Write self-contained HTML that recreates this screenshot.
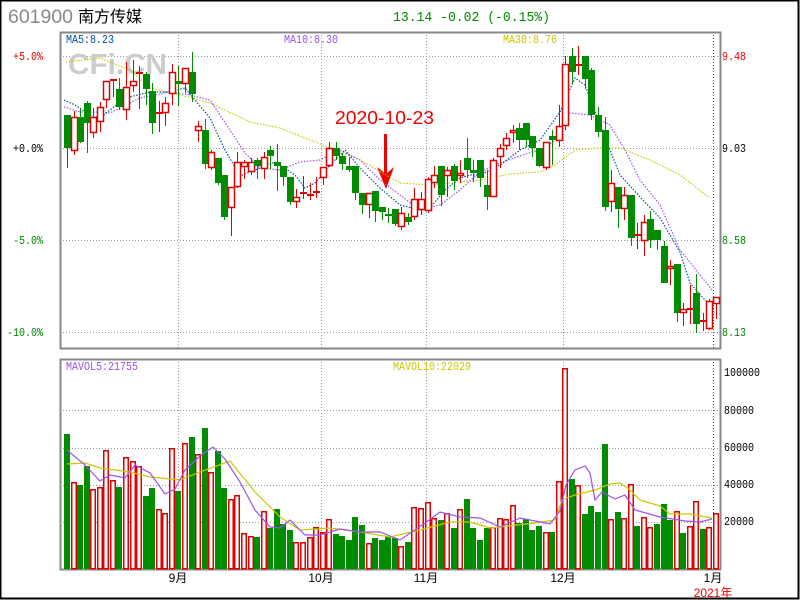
<!DOCTYPE html>
<html><head><meta charset="utf-8"><style>
html,body{margin:0;padding:0;background:#fff;}
body{width:800px;height:600px;overflow:hidden;}
svg{display:block;}
</style></head><body>
<svg id="s" width="800" height="600" xmlns="http://www.w3.org/2000/svg" font-family="Liberation Mono, monospace">
<rect x="0" y="0" width="800" height="600" fill="#fff"/>
<rect x="0.5" y="0.5" width="798" height="598" fill="none" stroke="#000" stroke-width="2"/>
<text x="8" y="23" font-family="Liberation Sans, sans-serif" font-size="19" fill="#888" textLength="65" lengthAdjust="spacingAndGlyphs">601900</text>
<text x="78" y="22" font-family="Liberation Sans, 'Noto Sans CJK SC', sans-serif" font-size="16" fill="#000">南方传媒</text>
<text x="393" y="21" font-size="14" fill="#008800" textLength="157" lengthAdjust="spacingAndGlyphs">13.14 -0.02 (-0.15%)</text>
<g stroke="#999" stroke-dasharray="1,2" stroke-width="1">
<line x1="60" y1="56.5" x2="720" y2="56.5"/><line x1="60" y1="148.5" x2="720" y2="148.5"/>
<line x1="60" y1="240.5" x2="720" y2="240.5"/><line x1="60" y1="332.5" x2="720" y2="332.5"/>
<line x1="178.5" y1="32" x2="178.5" y2="348"/><line x1="321.5" y1="32" x2="321.5" y2="348"/>
<line x1="426.5" y1="32" x2="426.5" y2="348"/><line x1="563.5" y1="32" x2="563.5" y2="348"/>
<line x1="60" y1="410.5" x2="720" y2="410.5"/><line x1="60" y1="448.5" x2="720" y2="448.5"/>
<line x1="60" y1="485.5" x2="720" y2="485.5"/><line x1="60" y1="522.5" x2="720" y2="522.5"/>
<line x1="178.5" y1="359" x2="178.5" y2="569"/><line x1="321.5" y1="359" x2="321.5" y2="569"/>
<line x1="426.5" y1="359" x2="426.5" y2="569"/><line x1="563.5" y1="359" x2="563.5" y2="569"/>
</g>
<g stroke="#e00" stroke-dasharray="1,2"><line x1="713.5" y1="32" x2="713.5" y2="348"/><line x1="713.5" y1="359" x2="713.5" y2="569"/></g>
<rect x="60.5" y="32.5" width="660" height="316" fill="none" stroke="#888" stroke-width="2"/>
<rect x="60.5" y="359.5" width="660" height="210" fill="none" stroke="#888" stroke-width="2"/>
<text x="68" y="74" font-family="Liberation Sans, sans-serif" font-weight="bold" font-size="29" fill="#cccccc" textLength="99" lengthAdjust="spacingAndGlyphs">CFi.CN</text>
<g font-size="12">
<text x="66" y="43" fill="#0050a0" textLength="48" lengthAdjust="spacingAndGlyphs">MA5:8.23</text>
<text x="284" y="43" fill="#a050f0" textLength="54" lengthAdjust="spacingAndGlyphs">MA10:8.30</text>
<text x="503" y="43" fill="#c8c800" textLength="54" lengthAdjust="spacingAndGlyphs">MA30:8.76</text>
<text x="66" y="370" fill="#a050f0" textLength="72" lengthAdjust="spacingAndGlyphs">MAVOL5:21755</text>
<text x="393" y="370" fill="#c8c800" textLength="78" lengthAdjust="spacingAndGlyphs">MAVOL10:22029</text>
<text x="13" y="60" fill="#e00" textLength="30" lengthAdjust="spacingAndGlyphs">+5.0%</text>
<text x="13" y="152" fill="#000" textLength="30" lengthAdjust="spacingAndGlyphs">+0.0%</text>
<text x="13" y="244" fill="#008800" textLength="30" lengthAdjust="spacingAndGlyphs">-5.0%</text>
<text x="7" y="336" fill="#008800" textLength="36" lengthAdjust="spacingAndGlyphs">-10.0%</text>
<text x="722" y="60" fill="#e00" textLength="24" lengthAdjust="spacingAndGlyphs">9.48</text>
<text x="722" y="152" fill="#000" textLength="24" lengthAdjust="spacingAndGlyphs">9.03</text>
<text x="722" y="244" fill="#008800" textLength="24" lengthAdjust="spacingAndGlyphs">8.58</text>
<text x="722" y="336" fill="#008800" textLength="24" lengthAdjust="spacingAndGlyphs">8.13</text>
<text x="724" y="376" fill="#000" textLength="36" lengthAdjust="spacingAndGlyphs">100000</text>
<text x="724" y="414" fill="#000" textLength="30" lengthAdjust="spacingAndGlyphs">80000</text>
<text x="724" y="451" fill="#000" textLength="30" lengthAdjust="spacingAndGlyphs">60000</text>
<text x="724" y="488" fill="#000" textLength="30" lengthAdjust="spacingAndGlyphs">40000</text>
<text x="724" y="525" fill="#000" textLength="30" lengthAdjust="spacingAndGlyphs">20000</text>
</g>
<g font-family="Liberation Sans, 'Noto Sans CJK SC', sans-serif" font-size="12" fill="#000" text-anchor="middle">
<text x="178" y="582">9月</text><text x="321" y="582">10月</text><text x="426" y="582">11月</text>
<text x="563" y="582">12月</text><text x="713" y="582">1月</text>
<text x="713" y="597" fill="#e00">2021年</text>
</g>
<text x="335" y="124" font-family="Liberation Sans, sans-serif" font-size="18" fill="#e00" textLength="99" lengthAdjust="spacingAndGlyphs">2020-10-23</text>
<rect x="384" y="134" width="3" height="40" fill="#e00"/>
<polygon points="377,167 386,174 394,167 386,189" fill="#e00"/>
<g id="g"></g>
</svg>
<script>
var P=[[0,115,148,115,168],[1,117,151,111,155],[0,117,142,108,143],[0,103,123,101,153],[1,117,133,108,138],[1,107,122,102,132],[1,81,100,81,108],[1,80,80,80,97],[0,89,107,78,110],[1,87,110,62,120],[1,81,86,60,92],[1,73,73,66,109],[0,74,89,72,105],[0,91,123,83,134],[1,113,113,101,132],[1,103,113,97,126],[1,72,94,64,105],[0,81,84,66,106],[1,68,84,68,93],[0,72,94,52,102],[1,126,131,121,142],[0,130,164,119,169],[1,152,168,150,170],[0,158,183,158,185],[0,175,217,175,220],[1,187,208,187,236],[1,162,187,152,188],[1,162,167,160,179],[1,162,172,158,175],[0,160,166,158,179],[1,157,169,152,179],[0,150,156,146,169],[0,162,166,144,191],[0,166,177,166,186],[0,177,202,177,205],[1,197,202,189,208],[1,193,193,176,199],[1,195,195,183,200],[1,192,192,177,198],[1,167,178,167,185],[1,148,166,142,167],[0,148,156,142,160],[0,156,164,153,170],[0,166,170,157,172],[0,166,193,166,200],[0,193,205,193,214],[1,193,205,193,218],[0,191,211,191,222],[0,207,212,207,220],[0,214,214,208,223],[0,209,224,209,226],[1,213,227,207,230],[0,217,222,213,225],[1,199,217,188,220],[1,199,210,192,215],[1,179,211,177,213],[1,175,183,166,188],[0,166,195,166,206],[1,170,176,167,197],[0,166,181,164,190],[1,173,176,160,183],[0,158,170,138,178],[0,170,173,160,182],[0,160,178,160,187],[0,185,197,170,210],[1,160,197,158,197],[1,148,157,144,168],[1,138,146,133,150],[1,130,133,125,143],[0,128,140,123,150],[0,123,140,123,147],[0,136,148,136,157],[0,148,166,148,167],[1,142,168,142,170],[0,136,140,130,165],[1,126,141,105,147],[1,64,126,56,130],[0,56,72,48,84],[1,65,65,46,75],[0,56,79,56,89],[0,70,115,68,120],[0,115,132,107,137],[0,130,207,117,211],[1,183,202,170,212],[0,187,209,187,228],[1,195,209,187,220],[0,195,238,195,246],[1,235,235,223,249],[1,222,241,215,256],[0,219,240,211,248],[0,230,240,230,250],[0,246,283,241,283],[1,266,269,260,285],[0,264,313,264,322],[1,309,313,303,326],[1,309,309,285,324],[0,293,324,274,333],[1,321,321,313,331],[1,301,329,299,330],[1,297,304,297,319]];
var VT=[434,482,485,466,489,487,450,480,487,457,461,466,496,488,509,513,448,491,443,437,454,428,472,451,488,499,495,533,536,537,511,528,509,524,530,542,542,537,527,532,519,534,536,540,517,525,543,538,540,537,538,546,542,507,508,502,518,520,513,528,509,499,528,540,528,527,518,519,505,523,519,530,526,532,532,481,368,479,485,514,506,512,444,519,512,518,484,526,517,527,524,504,520,511,533,526,501,529,527,513];
var VC="GRGGRRRRGRRRGGRRRGRGRGRGGRRRRGRGGGGRRRRRRGGGGGRGGGGRGRRRRGRGRGGGGRRRRGGGGRGRRGRGGGGRGRRGRRGGGRGRRGRRR";
var MA30=[[66,62],[100,58],[130,70],[150,88],[180,95],[210,103],[250,122],[280,128],[310,140],[330,148],[360,160],[400,183],[430,185],[480,180],[510,174],[540,172],[555,165],[575,150],[600,148],[620,148],[650,160],[680,175],[710,198]];
var MA10=[[64,107],[80,112],[100,112],[110,113],[140,98],[170,92],[190,95],[210,100],[220,115],[245,153],[260,168],[280,170],[300,162],[320,160],[340,150],[360,160],[380,180],[400,195],[420,210],[440,205],[460,190],[480,172],[500,163],[520,156],[545,148],[555,140],[570,113],[590,115],[610,125],[625,150],[640,180],[660,205],[680,250],[700,275],[712,290]];
var MA5=[[64,100],[75,105],[90,115],[100,118],[110,110],[125,98],[150,92],[170,92],[185,88],[195,100],[210,118],[225,150],[240,176],[255,170],[275,162],[295,175],[305,188],[315,183],[330,165],[345,150],[360,168],[380,188],[400,205],[420,210],[430,208],[445,190],[460,178],[470,175],[480,175],[500,165],[520,150],[540,140],[560,112],[575,78],[585,85],[600,125],[620,175],[640,197],[660,218],[680,252],[690,283],[705,300],[712,305]];
var V5=[[67,450],[85,465],[100,481],[110,475],[125,478],[135,465],[150,473],[165,494],[175,489],[185,470],[200,456],[213,447],[225,459],[240,482],[255,510],[270,527],[280,528],[290,520],[305,535],[320,535],[340,529],[360,532],[380,532],[400,540],[425,523],[440,512],[460,517],[480,518],[500,527],[520,518],[540,522],[550,524],[560,511],[566,485],[575,470],[585,466],[590,473],[595,500],[602,492],[615,499],[625,495],[635,510],[660,517],[685,521],[700,522],[712,519]];
var V10=[[67,464],[85,463],[100,468],[130,472],[150,477],[180,480],[200,472],[230,461],[255,492],[280,517],[300,530],[330,528],[360,532],[390,537],[420,530],[450,522],[470,522],[490,528],[535,523],[555,520],[562,500],[575,495],[595,490],[610,484],[620,483],[630,490],[640,500],[660,506],[670,514],[690,514],[712,518]];
var h="",R="#e00000",G="#008c00",st=(713-64)/99;
function pl(a,c,d){return '<polyline fill="none" stroke="'+c+'" stroke-width="1.2" '+(d?'stroke-dasharray="1.5,1.5" ':'')+'points="'+a.map(function(p){return p.join(",")}).join(" ")+'"/>';}
h+=pl(MA30,"#c8c800",1)+pl(MA10,"#a050f0",1)+pl(MA5,"#0050a0",1);
for(var i=0;i<P.length;i++){var p=P[i],x=Math.round(64+i*st),c=p[0]?R:G;
h+='<line x1="'+(x+3.5)+'" y1="'+p[3]+'" x2="'+(x+3.5)+'" y2="'+p[4]+'" stroke="'+c+'"/>';
var bh=Math.max(p[2]-p[1],1);
if(p[0]){ if(p[2]-p[1]<2) h+='<rect x="'+x+'" y="'+(p[1]-1)+'" width="7" height="2" fill="'+R+'"/>';
 else h+='<rect x="'+(x+0.5)+'" y="'+(p[1]+0.5)+'" width="6" height="'+(bh-1)+'" fill="#fff" stroke="'+R+'" stroke-width="1.5"/>';}
else h+='<rect x="'+x+'" y="'+p[1]+'" width="7" height="'+Math.max(bh,2)+'" fill="'+G+'"/>';}
for(var i=0;i<VT.length;i++){var x=Math.round(64+i*st),t=VT[i];
if(VC[i]=="G")h+='<rect x="'+x+'" y="'+t+'" width="6" height="'+(569-t)+'" fill="'+G+'"/>';
else h+='<rect x="'+(x+0.75)+'" y="'+(t+0.75)+'" width="4.5" height="'+(568-t)+'" fill="#fff" stroke="'+R+'" stroke-width="1.5"/>';}
h+=pl(V10,"#c8c800",0)+pl(V5,"#a050f0",0);
document.getElementById("g").innerHTML=h;
</script>
</body></html>
